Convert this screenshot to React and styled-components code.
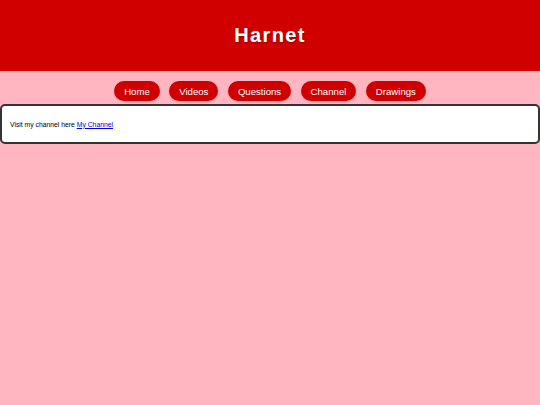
import React from 'react';
import styled, { createGlobalStyle } from 'styled-components';

const GlobalStyle = createGlobalStyle`
  html, body {
    margin: 0;
    padding: 0;
    background: #ffb6c1;
    font-family: "Liberation Sans", Arial, sans-serif;
  }
`;

const Header = styled.header`
  height: 71px;
  background: #d10000;
  display: flex;
  align-items: center;
  justify-content: center;
`;

const Title = styled.h1`
  margin: 0;
  color: #fff;
  font-size: 20px;
  font-weight: bold;
  letter-spacing: 1.4px;
  text-shadow: 1px 1px 2px rgba(0, 0, 0, 0.3);
`;

const Nav = styled.nav`
  display: flex;
  justify-content: center;
  gap: 9.5px;
  margin-top: 10px;
`;

const NavButton = styled.a`
  display: flex;
  align-items: center;
  height: 20px;
  padding: 0 10px;
  border-radius: 10px;
  background: #d10000;
  color: #fff;
  font-size: 9.6px;
  text-decoration: none;
  box-shadow: 0 1px 2px rgba(0, 0, 0, 0.15);
`;

const Card = styled.section`
  margin-top: 3px;
  height: 40px;
  box-sizing: border-box;
  border: 2px solid #333;
  border-radius: 5px;
  background: #fff;
  display: flex;
  align-items: center;
  padding-left: 8px;
  font-size: 6.8px;
  color: #000;
  white-space: pre;
`;

const Link = styled.a`
  color: #0000ee;
  text-decoration: underline;
`;

const links = ['Home', 'Videos', 'Questions', 'Channel', 'Drawings'];

export default function App() {
  return (
    <>
      <GlobalStyle />
      <Header>
        <Title>Harnet</Title>
      </Header>
      <Nav>
        {links.map((l) => (
          <NavButton key={l} href="#">{l}</NavButton>
        ))}
      </Nav>
      <Card>
        {'Visit my channel here '}<Link href="#">My Channel</Link>
      </Card>
    </>
  );
}
